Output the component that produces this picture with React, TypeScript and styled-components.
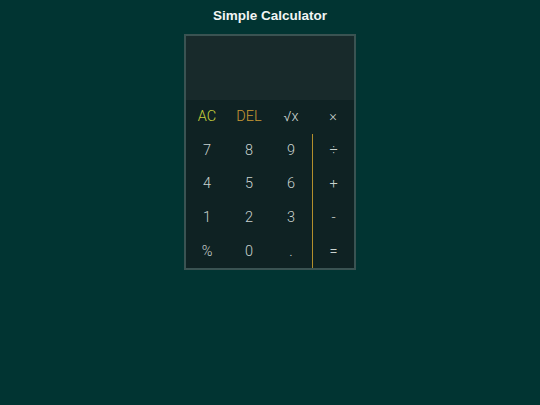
import React from "react";
import styled, { createGlobalStyle } from "styled-components";

const GlobalStyle = createGlobalStyle`
  html, body {
    margin: 0;
    padding: 0;
    background: #013432;
  }
  body {
    font-family: "Liberation Sans", Arial, sans-serif;
  }
`;

const Page = styled.div`
  width: 540px;
  height: 405px;
  display: flex;
  flex-direction: column;
  align-items: center;
  padding-top: 8px;
  box-sizing: border-box;
`;

const Title = styled.h1`
  margin: 0 0 10px;
  font-size: 13.5px;
  line-height: 16px;
  font-weight: bold;
  color: #f2f5f4;
`;

const Calculator = styled.div`
  width: 172px;
  border: 2px solid #3a5352;
  box-sizing: border-box;
  background: #0f2223;
`;

const Display = styled.div`
  height: 64px;
  background: #182a2b;
`;

const Keypad = styled.div`
  display: grid;
  grid-template-columns: repeat(4, 42px);
  grid-auto-rows: 33.6px;
`;

type Tone = "clear" | "del" | "plain";

const Key = styled.button<{ $tone: Tone; $op?: boolean }>`
  border: none;
  background: transparent;
  padding: 0;
  font-family: Roboto, "Liberation Sans", sans-serif;
  font-weight: 300;
  font-size: 14.5px;
  color: ${(p) =>
    p.$tone === "clear" ? "#c6cf3a" : p.$tone === "del" ? "#c99a34" : "#c9d2cf"};
  border-left: ${(p) => (p.$op ? "1.5px solid #b38f2c" : "none")};
  display: flex;
  align-items: center;
  justify-content: center;
  cursor: pointer;
`;

const rows: { label: string; tone?: Tone; op?: boolean }[][] = [
  [{ label: "AC", tone: "clear" }, { label: "DEL", tone: "del" }, { label: "√x" }, { label: "×" }],
  [{ label: "7" }, { label: "8" }, { label: "9" }, { label: "÷", op: true }],
  [{ label: "4" }, { label: "5" }, { label: "6" }, { label: "+", op: true }],
  [{ label: "1" }, { label: "2" }, { label: "3" }, { label: "-", op: true }],
  [{ label: "%" }, { label: "0" }, { label: "." }, { label: "=", op: true }],
];

export default function App() {
  return (
    <Page>
      <GlobalStyle />
      <Title>Simple Calculator</Title>
      <Calculator>
        <Display />
        <Keypad>
          {rows.flat().map((k, i) => (
            <Key key={i} $tone={k.tone ?? "plain"} $op={k.op}>
              {k.label}
            </Key>
          ))}
        </Keypad>
      </Calculator>
    </Page>
  );
}
